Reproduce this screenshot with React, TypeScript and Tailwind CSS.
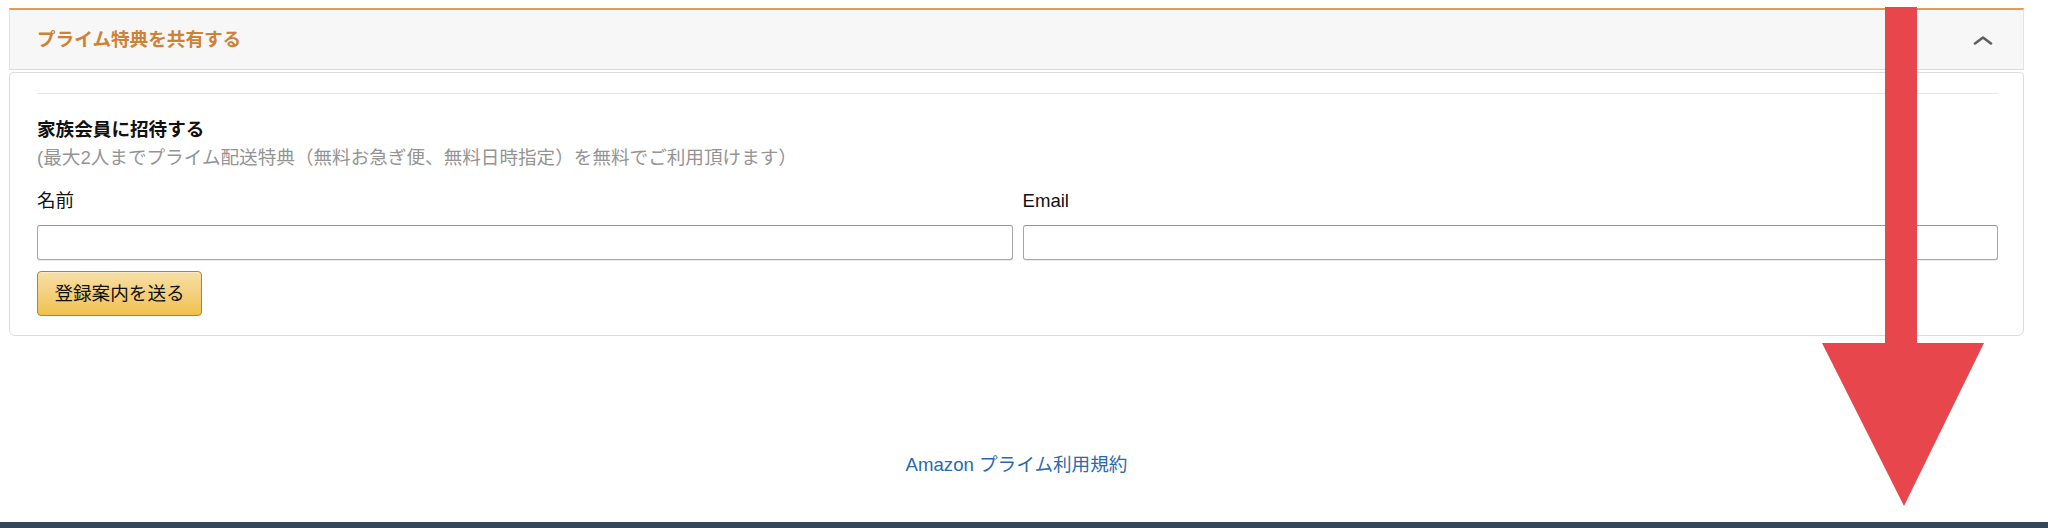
import React from "react";

const font = {
  fontFamily: '"Liberation Sans", "Noto Sans CJK JP", sans-serif',
};

function ChevronUp() {
  return (
    <svg width="20" height="10" viewBox="0 0 20 10" className="block">
      <polyline
        points="2,8.5 10,2.5 18,8.5"
        fill="none"
        stroke="#5f5f5f"
        strokeWidth="2.6"
        strokeLinecap="round"
        strokeLinejoin="round"
      />
    </svg>
  );
}

function DownArrow() {
  return (
    <svg
      width="164"
      height="500"
      viewBox="0 0 164 500"
      className="pointer-events-none absolute left-[1821px] top-[7px]"
    >
      <rect x="64" y="0" width="32" height="340" fill="#e8464d" />
      <polygon points="1,336 163,336 83,499" fill="#e8464d" />
    </svg>
  );
}

export default function App() {
  return (
    <div
      className="relative flex h-[528px] w-full flex-col overflow-hidden bg-white text-[18.6px] leading-[28px] text-[#111]"
      style={font}
    >
      <div className="pl-[9px] pr-[24px] pt-[8px]">
        {/* Accordion header */}
        <div className="flex h-[62px] items-center justify-between border-x border-b border-t-2 border-x-[#e3e3e3] border-b-[#dcdcdc] border-t-[#e59b52] bg-[#f7f7f7] pl-[27px] pr-[30px]">
          <span className="font-bold text-[#cd8236]">プライム特典を共有する</span>
          <ChevronUp />
        </div>

        {/* Body */}
        <div className="mt-[2px] rounded-b-[6px] rounded-t-[4px] border border-[#dddddd] pb-[19px] pl-[27px] pr-[25px] pt-[20px]">
          <div className="border-t border-[#e7e7e7]" />
          <div className="mt-[22px] font-bold">家族会員に招待する</div>
          <div className="text-[#949494]">
            (最大2人までプライム配送特典（無料お急ぎ便、無料日時指定）を無料でご利用頂けます）
          </div>

          <div className="mt-[15px] grid grid-cols-2 gap-x-[10px]">
            <div>
              <div>名前</div>
              <input
                type="text"
                className="mt-[10px] block h-[35px] w-full rounded-[3px] border border-[#a6a6a6] border-t-[#949494] bg-white shadow-[0_1px_0_rgba(0,0,0,0.07)] outline-none"
              />
            </div>
            <div>
              <div>Email</div>
              <input
                type="text"
                className="mt-[10px] block h-[35px] w-full rounded-[3px] border border-[#a6a6a6] border-t-[#949494] bg-white shadow-[0_1px_0_rgba(0,0,0,0.07)] outline-none"
              />
            </div>
          </div>

          <button className="mt-[11px] flex h-[45px] w-[165px] items-center justify-center rounded-[4px] border border-[#a88734] bg-gradient-to-b from-[#f7dfa5] to-[#f0c14b] text-[18.6px] text-[#111] shadow-[inset_0_1px_0_rgba(255,255,255,0.4)]">
            登録案内を送る
          </button>
        </div>
      </div>

      <div className="mt-[115px] pl-[9px] pr-[24px] text-center">
        <a className="text-[#2a69b0]">Amazon プライム利用規約</a>
      </div>

      <div className="mt-auto h-[6px] bg-[#37475a]" />

      <DownArrow />
    </div>
  );
}
